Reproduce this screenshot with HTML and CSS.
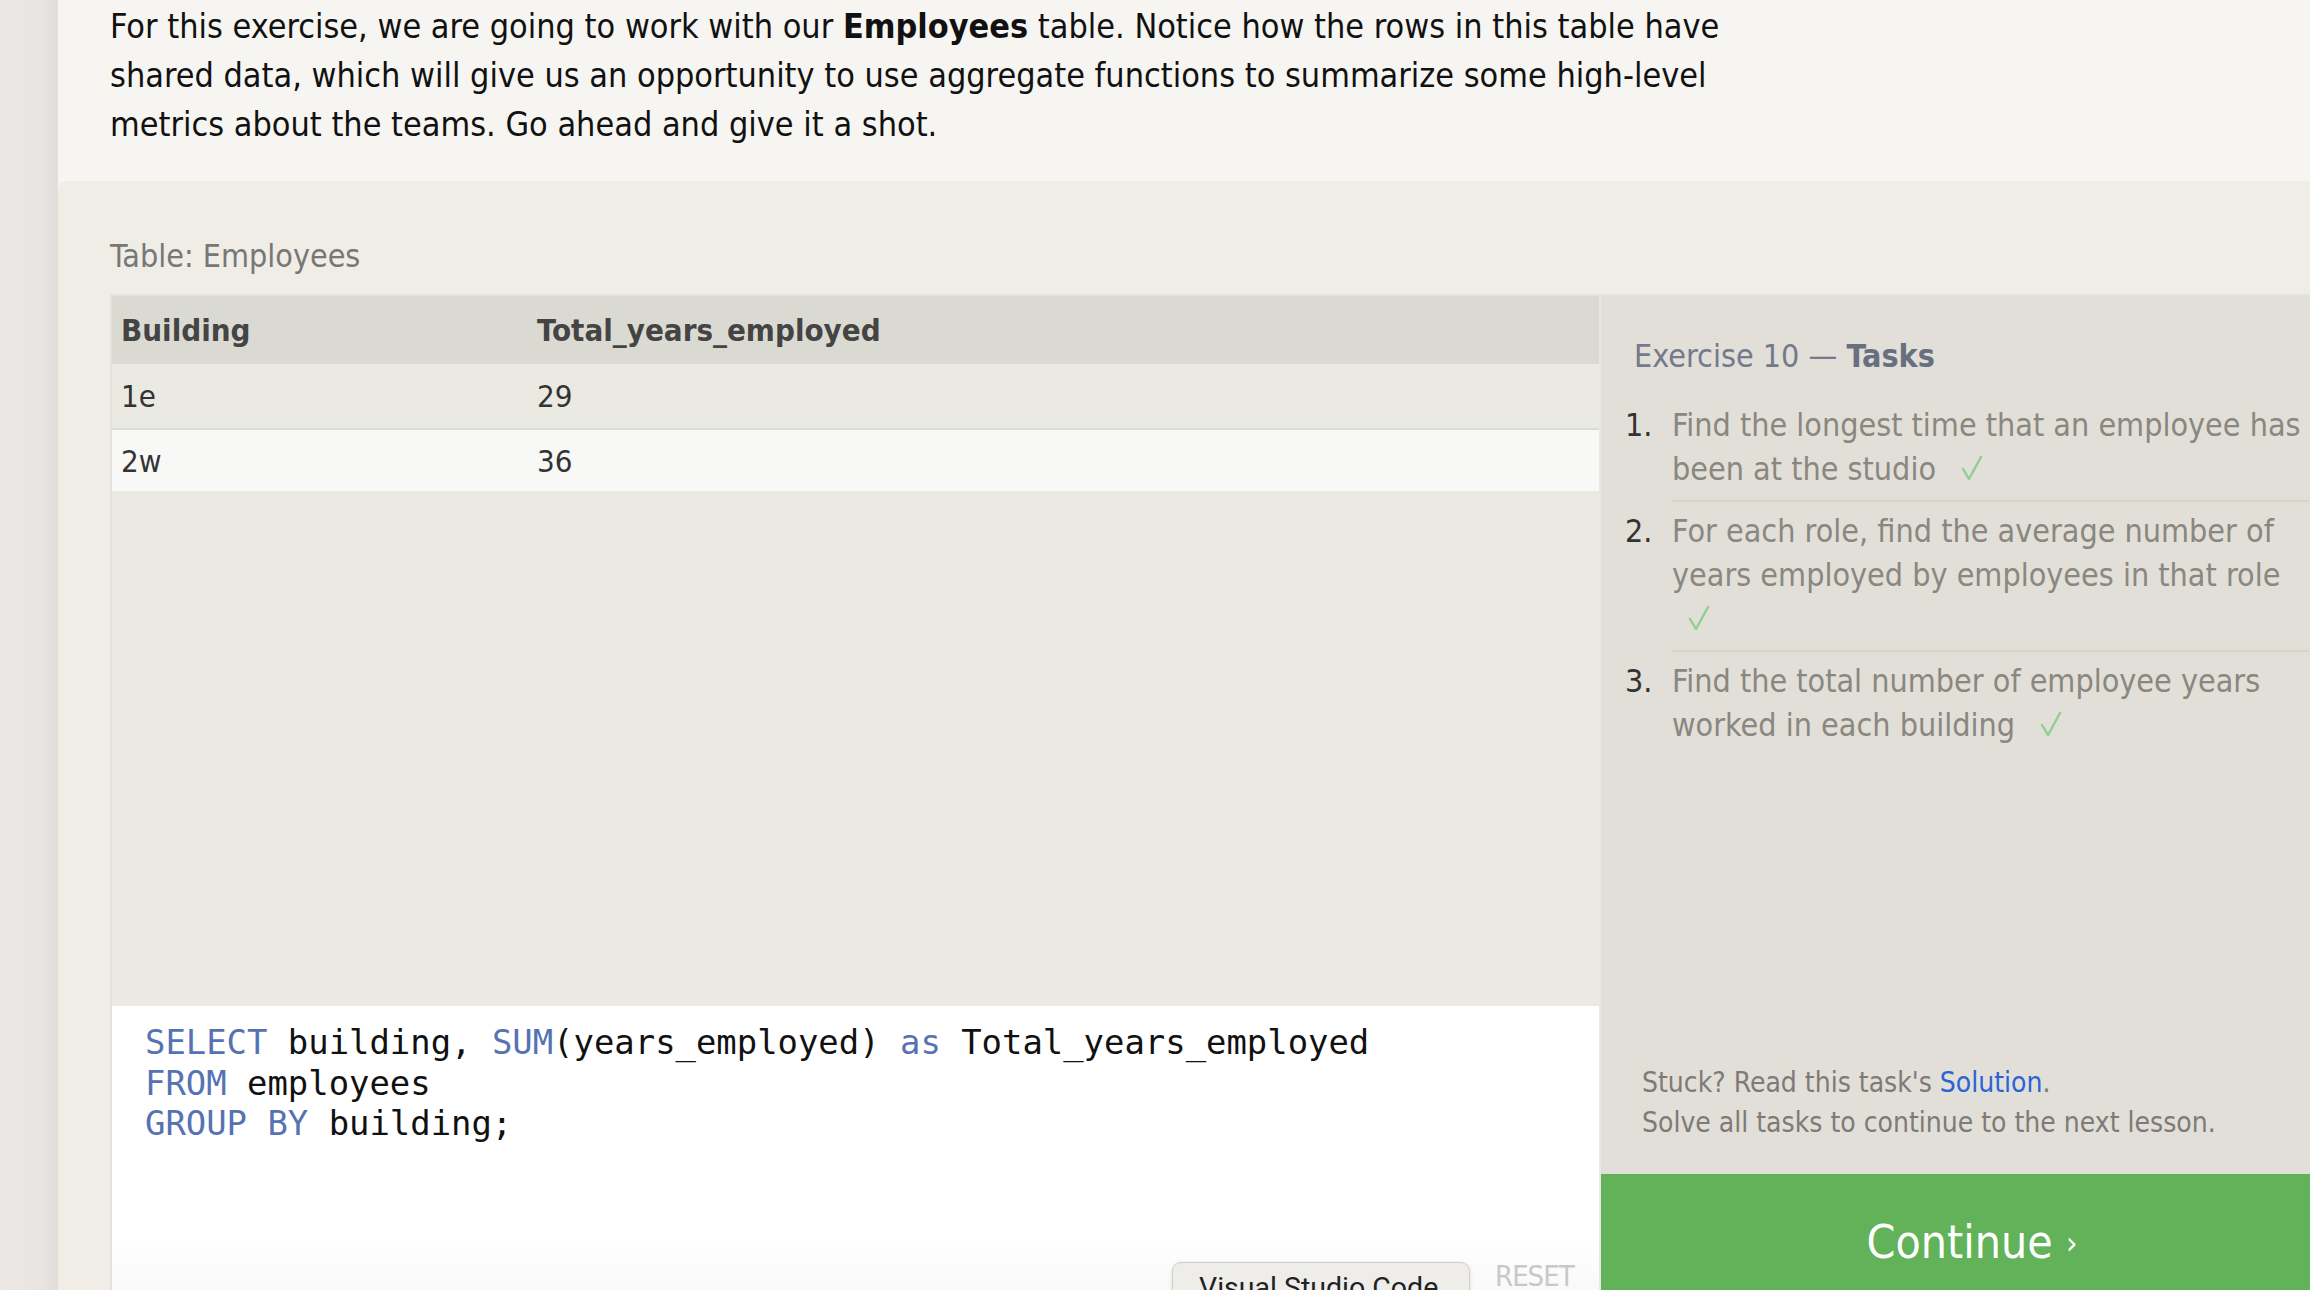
FILE: index.html
```html
<!DOCTYPE html>
<html lang="en">
<head>
<meta charset="utf-8">
<title>SQL Lesson - Exercise 10</title>
<link rel="stylesheet" href="styles.css">
</head>
<body>
<div class="page">
  <div class="rail"></div>
  <div class="main">
    <div class="intro">
      <p>For this exercise, we are going to work with our <strong>Employees</strong> table. Notice how the rows in this table have shared data, which will give us an opportunity to use aggregate functions to summarize some high-level metrics about the teams. Go ahead and give it a shot.</p>
    </div>
    <div class="lower">
      <div class="table-title">Table: Employees</div>
      <div class="workspace">
        <div class="data-col">
          <div class="results">
            <table class="grid">
              <thead>
                <tr><th class="c1">Building</th><th>Total_years_employed</th></tr>
              </thead>
              <tbody>
                <tr class="odd"><td class="c1">1e</td><td>29</td></tr>
                <tr class="even"><td class="c1">2w</td><td>36</td></tr>
              </tbody>
            </table>
          </div>
          <div class="editor">
            <pre class="code"><span class="kw">SELECT</span> building, <span class="kw">SUM</span>(years_employed) <span class="kw">as</span> Total_years_employed
<span class="kw">FROM</span> employees
<span class="kw">GROUP BY</span> building;</pre>
            <div class="tooltip">Visual Studio Code</div>
            <div class="reset">RESET</div>
          </div>
        </div>
        <div class="panel">
          <div class="tasks">
            <h3 class="tasks-head">Exercise 10 — <b>Tasks</b></h3>
            <ol class="task-list">
              <li><span class="num">1.</span><span class="txt">Find the longest time that an employee has been at the studio <span class="check"><svg width="22" height="24" viewBox="0 0 22 24"><path d="M2 13 L8 23 L20 1" fill="none" stroke="#8fcf8f" stroke-width="2.4" stroke-linejoin="round" stroke-linecap="round"/></svg></span></span></li>
              <li><span class="num">2.</span><span class="txt">For each role, find the average number of years employed by employees in that role <span class="check"><svg width="22" height="24" viewBox="0 0 22 24"><path d="M2 13 L8 23 L20 1" fill="none" stroke="#8fcf8f" stroke-width="2.4" stroke-linejoin="round" stroke-linecap="round"/></svg></span></span></li>
              <li><span class="num">3.</span><span class="txt">Find the total number of employee years worked in each building <span class="check"><svg width="22" height="24" viewBox="0 0 22 24"><path d="M2 13 L8 23 L20 1" fill="none" stroke="#8fcf8f" stroke-width="2.4" stroke-linejoin="round" stroke-linecap="round"/></svg></span></span></li>
            </ol>
          </div>
          <div class="stuck">
            <div>Stuck? Read this task's <a class="sol" href="#">Solution</a>.</div>
            <div>Solve all tasks to continue to the next lesson.</div>
          </div>
          <div class="continue">Continue <span class="chev">›</span></div>
        </div>
      </div>
    </div>
  </div>
</div>
</body>
</html>
```
FILE: styles.css
```css
html, body {
  margin: 0;
  padding: 0;
}
body {
  width: 2310px;
  height: 1290px;
  overflow: hidden;
  background: #e9e6e3;
  font-family: "DejaVu Sans Condensed", "DejaVu Sans", sans-serif;
  color: #111;
}
.page {
  display: flex;
  width: 2400px;
}
.rail {
  width: 58px;
  flex: none;
  height: 1400px;
  background: linear-gradient(to right, #eae7e4 0%, #e8e5e2 70%, #e0ddda 100%);
}
.main {
  width: 2342px;
  flex: none;
  background: #f6f5f1;
}
.intro {
  padding: 2px 0 32px 52px;
}
.intro p {
  margin: 0;
  width: 1660px;
  font-size: 33.9px;
  line-height: 49px;
  color: #111;
}
.intro strong {
  font-weight: bold;
}
.lower {
  background: #efede6;
  border-top-left-radius: 9px;
  padding: 55px 0 0 52px;
}
.table-title {
  font-size: 32px;
  line-height: 40px;
  color: #777;
  margin-bottom: 18px;
}
.workspace {
  display: flex;
  border-top: 2px solid #e4e3dd;
}
.data-col {
  width: 1487px;
  flex: none;
  border-left: 2px solid #e3e2dc;
  border-right: 2px solid #e8e7e1;
  display: flex;
  flex-direction: column;
}
.results {
  height: 710px;
  background: #eaeae2;
}
.grid {
  width: 100%;
  border-collapse: collapse;
  font-size: 31px;
}
.grid th {
  background: #dadad2;
  height: 68px;
  padding: 0 0 0 9px;
  text-align: left;
  font-weight: bold;
  color: #444;
}
.grid td {
  padding: 0 0 0 9px;
  color: #333;
}
.grid .c1 {
  width: 407px;
}
.grid tr.odd td {
  background: #eaeae2;
  height: 64px;
  border-bottom: 2px solid #dcdcd6;
}
.grid tr.even td {
  background: #f8f8f7;
  height: 61px;
}
.editor {
  position: relative;
  height: 320px;
  background: linear-gradient(to bottom, #ffffff 0%, #ffffff 72%, #f5f5f4 100%);
}
.code {
  margin: 0;
  padding: 17px 0 0 33px;
  font-family: "DejaVu Sans Mono", "Liberation Mono", monospace;
  font-size: 33.9px;
  line-height: 40.5px;
  color: #111;
}
.kw {
  color: #5672b2;
}
.tooltip {
  position: absolute;
  left: 1060px;
  top: 256px;
  width: 270px;
  height: 70px;
  padding: 8px 0 0 26px;
  box-sizing: content-box;
  background: #efedea;
  border: 1px solid #d2cfcb;
  border-radius: 9px;
  box-shadow: 0 1px 4px rgba(0, 0, 0, 0.12);
  font-family: Roboto, "Liberation Sans", sans-serif;
  font-size: 28.5px;
  line-height: 34px;
  color: #222;
}
.reset {
  position: absolute;
  left: 1383px;
  top: 250px;
  font-size: 29px;
  line-height: 40px;
  letter-spacing: -1px;
  color: #c8c8c6;
}
.panel {
  width: 742px;
  flex: none;
  background: #e1dfd7;
  display: flex;
  flex-direction: column;
}
.tasks {
  flex: 1;
  padding: 40px 34px 0 24px;
}
.tasks-head {
  margin: 0 0 20px 9px;
  font-size: 32px;
  line-height: 40px;
  font-weight: normal;
  color: #737a8b;
}
.tasks-head b {
  font-weight: bold;
  color: #68707f;
}
.task-list {
  list-style: none;
  margin: 0;
  padding: 0;
}
.task-list li {
  display: grid;
  grid-template-columns: 47px 1fr;
  font-size: 32px;
  line-height: 44px;
}
.num {
  padding-top: 7px;
  color: #333;
}
.txt {
  padding: 7px 0 9px;
  border-bottom: 2px solid #d7d5cb;
  color: #8a8780;
}
.task-list li:last-child .txt {
  border-bottom: none;
}
.check {
  display: inline-block;
  margin-left: 16px;
  vertical-align: baseline;
}
.check svg {
  display: block;
}
.stuck {
  padding: 0 0 31px 41px;
  font-size: 28px;
  line-height: 40px;
  color: #7f7a77;
}
.sol {
  color: #2b62d6;
  text-decoration: none;
}
.continue {
  height: 152px;
  box-sizing: border-box;
  padding-top: 38px;
  background: #62b25a;
  color: #fff;
  text-align: center;
  font-size: 46px;
  line-height: 60px;
}
.chev {
  font-size: 32px;
  vertical-align: 4px;
}
```
